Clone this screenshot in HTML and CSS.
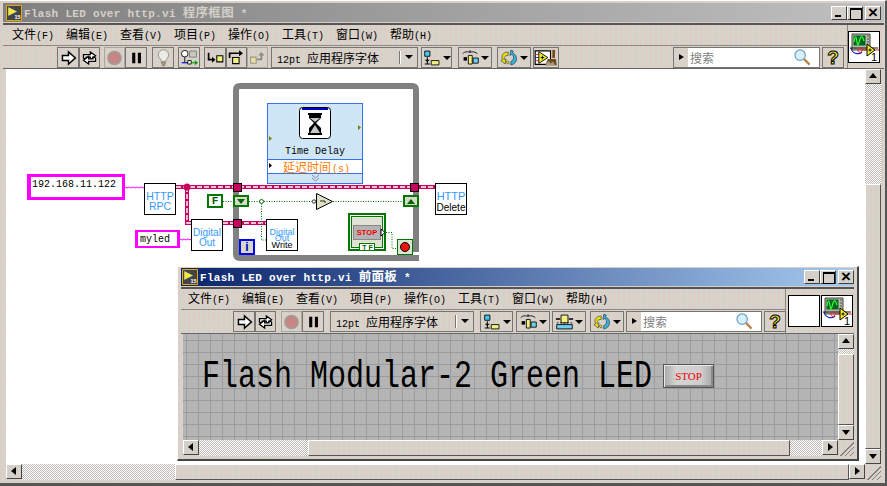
FILE: index.html
```html
<!DOCTYPE html>
<html lang="zh">
<head>
<meta charset="utf-8">
<title>Flash LED over http.vi</title>
<link rel="stylesheet" href="styles.css">
</head>
<body>
<svg class="defs" aria-hidden="true">
  <symbol id="i-app" viewBox="0 0 16 16"><path d="M.5.500h15v15H.5z" fill="#444" stroke="#e8a800"/><path d="M2.500 2.500l8 4-8 4z" fill="#f4ec20" stroke="#dde"  stroke-width=".5"/><text x="8.500" y="14" class="app-num">15</text></symbol>
  <symbol id="i-run" viewBox="0 0 22 20"><path d="M4 7h7V3l8 7-8 7v-4H4z" fill="#fff" stroke="#000" stroke-width="1.700"/></symbol>
  <symbol id="i-cont" viewBox="0 0 22 20"><path d="M4 10V6h8V3l6 4.500-6 4.500V9H7v2z" fill="#fff" stroke="#000" stroke-width="1.500"/><path d="M18 10v4h-8v3l-6-4.500L10 8v3h5V9z" fill="#fff" stroke="#000" stroke-width="1.500"/></symbol>
  <symbol id="i-stop" viewBox="0 0 22 20"><circle cx="11" cy="10" r="7.500" fill="#c98484" stroke="#a09d96" stroke-width="2"/></symbol>
  <symbol id="i-pause" viewBox="0 0 22 20"><path d="M6 4h3.600v12H6zM12.600 4h3.600v12h-3.600z" fill="#000"/></symbol>
  <symbol id="i-bulb" viewBox="0 0 22 20"><path d="M8.500 14c0-3-3.500-4-3.500-7.500a6 6 0 0 1 12 0C17 10 13.500 11 13.500 14z" fill="#ecece4" stroke="#8f8c80"/><path d="M8.500 15h5v1.500h-5zM9.500 17.500h3V19h-3z" fill="#b0a060" stroke="#77735f" stroke-width=".6"/></symbol>
  <symbol id="i-probe" viewBox="0 0 22 20"><circle cx="5.500" cy="5" r="3.800" fill="#fff" stroke="#000"/><path d="M5.500 9v6" stroke="#000"/><path d="M11 2h8v7h-8z" fill="#c8c8c0" stroke="#777"/><path d="M2 15.500h8" stroke="#0000e0" stroke-width="1.300"/><path d="M9 13h4v4H9z" fill="#fff" stroke="#000"/><path d="M13 15.500h4" stroke="#00a000" stroke-width="1.300"/><path d="M17 12.500l4 3-4 3z" fill="#00a000"/></symbol>
  <symbol id="i-into" viewBox="0 0 22 20"><path d="M3 4v8h5" fill="none" stroke="#000" stroke-width="2"/><path d="M7 8.500l4 3.500-4 3.500z"/><path d="M12.500 7.500h7v7h-7z" fill="#f4f080" stroke="#000" stroke-width="1.200"/></symbol>
  <symbol id="i-over" viewBox="0 0 22 20"><path d="M3 10V4.500h11" fill="none" stroke="#000" stroke-width="2"/><path d="M14 1l4.500 3.500L14 8z"/><path d="M6.500 9.500h7.500v7H6.500z" fill="#f4f080" stroke="#000" stroke-width="1.200"/></symbol>
  <symbol id="i-out" viewBox="0 0 22 20"><path d="M10 11.500h5.500V6" fill="none" stroke="#8e8a78" stroke-width="2"/><path d="M12 7l3.500-4L19 7z" fill="#8e8a78"/><path d="M3 9h6.500v7H3z" fill="#e4dfa0" stroke="#9a968a" stroke-width="1.200"/></symbol>
  <symbol id="i-align" viewBox="0 0 22 20"><path d="M2 2h6v6H2z" fill="#40c8f0" stroke="#000"/><path d="M5 9v8M2 17h6" stroke="#000" stroke-width="1.200"/><path d="M2 12l3 2.500L8 12z"/><path d="M9.500 13h9v5h-9z" fill="#f4f080" stroke="#000"/></symbol>
  <symbol id="i-dist" viewBox="0 0 22 20"><path d="M2 5c3-3 5-2 8-2s5-1 9 2" fill="none" stroke="#000"/><path d="M10.500 1v3" stroke="#000"/><path d="M3 9h4v4H3z"/><path d="M8.500 7h4.500v10H8.500z" fill="#f4f080" stroke="#000"/><path d="M14 10h6v6h-6z" fill="#70d0f0" stroke="#000"/></symbol>
  <symbol id="i-size" viewBox="0 0 22 20"><path d="M7 2h8v9H7z" fill="#f4f080" stroke="#000"/><path d="M1 6.500h5M16 6.500h5" stroke="#000" stroke-width="1.500"/><path d="M2 13h18v5H2z" fill="#70d0f0" stroke="#000"/><path d="M2 11h18" stroke="#000" stroke-dasharray="2 2"/></symbol>
  <symbol id="i-cycle" viewBox="0 0 22 20"><path d="M9.500 3C3 3 1 8 3 12l-2 1 5 4 1-6-2 1c-1-3 1-5 4.500-5z" fill="#e8e000" stroke="#444" stroke-width=".8"/><path d="M9.500 17c1.500 0 1-4-1-3.500S6 15 9.500 17z" fill="#e8e000" stroke="#444" stroke-width=".8"/><path d="M12.500 1l-1 6 2-1c3 1 3 7-1 8v4c8-1 9-11 2-14l1-2z" fill="#38b0d8" stroke="#245" stroke-width=".8"/></symbol>
  <symbol id="i-clean" viewBox="0 0 26 20"><path d="M1 2h17v15H1z" fill="#fff" stroke="#000" stroke-width="1.300"/><path d="M1 6h5M1 13h5" stroke="#e02020"/><path d="M1 9.500h5" stroke="#2020e0"/><path d="M5 3l10 6.500L5 16z" fill="#f4ec20" stroke="#000"/><path d="M7 9.500h4M9 7.500v4" stroke="#000"/><path d="M20 1h3v9h-3z" fill="#7a4a1a"/><path d="M15 11h9l1 7H12z" fill="#6e4a20"/><path d="M13 16l3-3 2 3 3-2 2 4H13z" fill="#a89878"/></symbol>
  <symbol id="i-mag" viewBox="0 0 18 18"><path d="M10.500 10.500l6 6" stroke="#b8864a" stroke-width="2.400"/><circle cx="6.500" cy="6.500" r="5.500" fill="#d8f0fa" stroke="#6f9fc0" stroke-width="1.300"/></symbol>
  <symbol id="i-vi" viewBox="0 0 30 30"><path d="M3 2h18v16H3z" fill="#b8b8a8" stroke="#444"/><path d="M4.500 3.500h12v10h-12z" fill="#062"/><path d="M5 10c1-7 2-7 3 0s2 0 3-3 2-4 4 2" fill="none" stroke="#3f3" stroke-width="1.200"/><path d="M18 4h2M18 7h2M18 10h2" stroke="#555"/><path d="M2 16c1 6 8 7 11 4" fill="none" stroke="#22c" stroke-width="1.200"/><path d="M1 16h28" stroke="#111"/><path d="M9 19c0-4 4-4 4-1s-3 3-4 1z" fill="none" stroke="#e22"/><path d="M13 18h17" stroke="#e22"/><path d="M18 12l8 6-8 6z" fill="#f4ec20" stroke="#000"/><path d="M19.500 18h3M21 16.500v3" stroke="#000"/></symbol>
</svg>

<main class="win back">
  <header class="title title-gray">
    <svg class="app"><use href="#i-app"/></svg>
    <span class="title-text">Flash LED over http.vi <span class="zh">程序框图</span> *</span>
    <span class="wbtn wbtn-min"></span><span class="wbtn wbtn-max"></span><span class="wbtn wbtn-close m2"></span>
  </header>
  <div class="head head-back">
    <div class="head-main">
      <nav class="menu menu-back">
        <span class="mi">文件<span class="k">(F)</span></span>
        <span class="mi">编辑<span class="k">(E)</span></span>
        <span class="mi">查看<span class="k">(V)</span></span>
        <span class="mi">项目<span class="k">(P)</span></span>
        <span class="mi">操作<span class="k">(O)</span></span>
        <span class="mi">工具<span class="k">(T)</span></span>
        <span class="mi">窗口<span class="k">(W)</span></span>
        <span class="mi">帮助<span class="k">(H)</span></span>
      </nav>
      <div class="tools tools-back">
        <span class="btn w22"><svg class="ic"><use href="#i-run"/></svg></span><span class="btn w21"><svg class="ic"><use href="#i-cont"/></svg></span>
        <span class="btn w21 m4 dim"><svg class="ic"><use href="#i-stop"/></svg></span><span class="btn w22"><svg class="ic"><use href="#i-pause"/></svg></span>
        <span class="btn w22 m5"><svg class="ic"><use href="#i-bulb"/></svg></span>
        <span class="btn w22 m4"><svg class="ic"><use href="#i-probe"/></svg></span>
        <span class="btn w22 m4"><svg class="ic"><use href="#i-into"/></svg></span><span class="btn w21"><svg class="ic"><use href="#i-over"/></svg></span><span class="btn w21 dim"><svg class="ic"><use href="#i-out"/></svg></span>
        <span class="ring ring-back m3"><span class="ring-text"><span class="mono">12pt</span>应用程序字体</span><span class="ring-arrow"></span></span>
        <span class="btn w31 m3"><svg class="ic"><use href="#i-align"/></svg><i class="tri"></i></span>
        <span class="btn w34 m6"><svg class="ic"><use href="#i-dist"/></svg><i class="tri"></i></span>
        <span class="btn w34 m5"><svg class="ic"><use href="#i-cycle"/></svg><i class="tri"></i></span>
        <span class="btn w26 m2"><svg class="ic ic-wide"><use href="#i-clean"/></svg></span>
        <span class="grow"></span>
        <span class="search search-back"><i class="search-tab"></i><span class="search-ph">搜索</span><svg class="mag"><use href="#i-mag"/></svg></span>
        <span class="btn w22 m2"><span class="help">?</span></span>
      </div>
    </div>
    <div class="panes">
      <span class="vi-icon"><svg class="vi-svg"><use href="#i-vi"/></svg><b class="vi-num">1</b></span>
    </div>
  </div>
  <div class="work">
    <section class="diagram">
      <div class="origin">
        <div class="delay">
          <div class="delay-top"><span class="delay-name">Time Delay</span></div>
          <div class="delay-row">延迟时间<span class="delay-u">(s)</span></div>
          <div class="delay-end"></div>
        </div>
        <svg class="wires" width="887" height="486" viewBox="0 0 887 486">
          <!-- while loop -->
          <path class="loop" d="M416 252V90q0-4-4-4H240q-4 0-4 4v164q0 4 4 4h179"/>
          <!-- thin string wires -->
          <path class="w-str" d="M125 187l2 1 2-1 2 1 2-1 2 1 2-1 2 1 2-1 2 1 2-1M180 239l2 1 2-1 2 1 2-1 2 1 1-1"/>
          <!-- error wires -->
          <path class="w-err" d="M176 187h260M187 187v36h4M223 223h43"/>
          <path class="w-err-c" d="M176 187h260M187 187v36h4M223 223h43"/>
          <circle class="junction" cx="187" cy="187" r="3.500"/>
          <!-- boolean wires -->
          <path class="w-bool" d="M223 201.500h10M249 201.500h63M333 201.500h70M261.500 201v39h5M386 232.500h6v16h5"/>
          <circle class="bool-j" cx="261.500" cy="201.500" r="2"/>
          <!-- tunnels -->
          <rect class="tunnel" x="233.500" y="183.500" width="8" height="8"/>
          <rect class="tunnel" x="233.500" y="219.500" width="8" height="8"/>
          <rect class="tunnel" x="410.500" y="183.500" width="8" height="8"/>
          <!-- shift registers -->
          <rect class="sr" x="234" y="196" width="14" height="10"/>
          <path class="sr-t" d="M237 199h8l-4 5z"/>
          <rect class="sr" x="404" y="196" width="14" height="10"/>
          <path class="sr-t" d="M407 204h8l-4-5z"/>
          <!-- not gate -->
          <circle class="not-c" cx="314" cy="201.500" r="1.700"/>
          <path class="not" d="M316.500 193.500l16 8-16 8z"/>
          <path class="not-g" d="M320 201h5M325 201v2"/>
          <!-- stop terminal -->
          <rect class="term-o" x="349" y="214" width="36" height="36"/>
          <rect class="term-i" x="351.500" y="216.500" width="31" height="31"/>
          <rect class="term-b" x="353.500" y="225.500" width="27" height="14"/>
          <rect class="term-tf" x="359.500" y="243.500" width="15" height="7"/>
          <path class="term-out" d="M381 229l4 3.500-4 3.500z"/>
          <!-- stop condition -->
          <rect class="cond" x="397.500" y="239.500" width="15" height="15"/>
          <circle class="cond-r" cx="405" cy="247" r="4.500"/>
          <!-- hourglass -->
          <rect class="hg" x="299.500" y="107.500" width="31" height="31" rx="3"/>
          <path class="hg-top" d="M302 108h26v2h-26z"/>
          <path class="hg-f" d="M308 113h14v2h-1v3l-5 5 5 5v5h1v2h-14v-2h1v-5l5-5-5-5v-3h-1z"/>
          <path class="hg-s" d="M310 118h10l-5 4zM315 125l5 8h-10z"/>
          <!-- time delay terminals -->
          <path class="td-t" d="M269 136l3 2.500-3 2.500zM358 125l3 2.500-3 2.500z"/>
          <path class="td-r" d="M269 163l3 2.500-3 2.500z"/>
          <path class="td-c" d="M312 175l3.500 3 3.500-3M312 178l3.500 3 3.500-3"/>
        </svg>
        <div class="const const-ip">192.168.11.122</div>
        <div class="const const-my">myled</div>
        <div class="node node-rpc"><span class="blue">HTTP<br>RPC</span></div>
        <div class="node node-out"><span class="blue">Digital<br>Out</span></div>
        <div class="node node-write"><span class="blue small">Digital<br>Out</span><span class="ov">Write</span></div>
        <div class="node node-del"><span class="blue big">HTTP</span><br><span class="blk">Delete</span></div>
        <div class="bool-f">F</div>
        <div class="iter">i</div>
        <div class="tf">T F</div>
        <div class="stop-lbl">STOP</div>
      </div>
    </section>
    <aside class="vbar vbar-back">
      <span class="sb sb-up"></span><span class="chk chk-v"></span><span class="thumb"></span><span class="sb sb-down"></span>
    </aside>
  </div>
  <div class="hbar hbar-back">
    <span class="sb sb-left"></span><span class="chk chk-h"></span><span class="thumb"></span><span class="sb sb-right"></span><span class="grip"></span>
  </div>
</main>

<section class="win front">
  <header class="title title-blue">
    <svg class="app"><use href="#i-app"/></svg>
    <span class="title-text">Flash LED over http.vi <span class="zh">前面板</span> *</span>
    <span class="wbtn wbtn-min"></span><span class="wbtn wbtn-max"></span><span class="wbtn wbtn-close m2"></span>
  </header>
  <div class="head head-front">
    <div class="head-main">
      <nav class="menu menu-front">
        <span class="mi">文件<span class="k">(F)</span></span>
        <span class="mi">编辑<span class="k">(E)</span></span>
        <span class="mi">查看<span class="k">(V)</span></span>
        <span class="mi">项目<span class="k">(P)</span></span>
        <span class="mi">操作<span class="k">(O)</span></span>
        <span class="mi">工具<span class="k">(T)</span></span>
        <span class="mi">窗口<span class="k">(W)</span></span>
        <span class="mi">帮助<span class="k">(H)</span></span>
      </nav>
      <div class="tools tools-front">
        <span class="btn w22"><svg class="ic"><use href="#i-run"/></svg></span><span class="btn w21"><svg class="ic"><use href="#i-cont"/></svg></span>
        <span class="btn w21 m5 dim"><svg class="ic"><use href="#i-stop"/></svg></span><span class="btn w22"><svg class="ic"><use href="#i-pause"/></svg></span>
        <span class="ring ring-front m6"><span class="ring-text"><span class="mono">12pt</span>应用程序字体</span><span class="ring-arrow"></span></span>
        <span class="btn w33 m6"><svg class="ic"><use href="#i-align"/></svg><i class="tri"></i></span>
        <span class="btn w34 m3"><svg class="ic"><use href="#i-dist"/></svg><i class="tri"></i></span>
        <span class="btn w34 m2"><svg class="ic"><use href="#i-size"/></svg><i class="tri"></i></span>
        <span class="btn w34 m4"><svg class="ic"><use href="#i-cycle"/></svg><i class="tri"></i></span>
        <span class="search search-front m2"><i class="search-tab"></i><span class="search-ph">搜索</span><svg class="mag"><use href="#i-mag"/></svg></span>
        <span class="btn w22 m2"><span class="help">?</span></span>
      </div>
    </div>
    <div class="panes panes-front">
      <span class="vi-icon"></span>
      <span class="vi-icon"><svg class="vi-svg"><use href="#i-vi"/></svg><b class="vi-num">1</b></span>
    </div>
  </div>
  <div class="work">
    <section class="panel">
      <h1 class="big-label">Flash Modular-2 Green LED</h1>
      <i class="ghost"></i>
      <span class="stop-btn">STOP</span>
    </section>
    <aside class="vbar vbar-front">
      <span class="sb sb-up"></span><span class="chk chk-v"></span><span class="thumb"></span><span class="sb sb-down"></span>
    </aside>
  </div>
  <div class="hbar hbar-front">
    <span class="sb sb-left"></span><span class="chk chk-h"></span><span class="thumb"></span><span class="chk chk-h2"></span><span class="sb sb-right"></span><span class="grip"></span>
  </div>
</section>
</body>
</html>
```
FILE: styles.css
```css
* { box-sizing: border-box; }
html, body { margin: 0; height: 100%; }
body {
  position: relative;
  width: 887px;
  height: 486px;
  overflow: hidden;
  background: #d4d0c8;
  font-family: "Noto Sans CJK SC", "Liberation Sans", sans-serif;
  color: #000;
}
.defs { position: absolute; width: 0; height: 0; }
.app-num { font: bold 5.500px "Liberation Sans", sans-serif; fill: #fff; }

.win {
  position: absolute;
  display: flex;
  flex-direction: column;
  background-color: #d6d3cb;
  background-image: radial-gradient(circle at 1px 1px, #e3c8c2 .6px, transparent 1px);
  background-size: 5px 3px;
}
.back {
  left: 0; top: 0; width: 887px; height: 486px;
  padding: 2px 1px 3px 3px;
  border-top: 1px solid #fff;
  border-bottom: 3px solid #555;
  border-right: 2px solid #555;
}
.front {
  left: 177px; top: 266px; width: 682px; height: 195px;
  padding: 1px 3px 3px 3px;
  border: 1px solid #fff;
  border-right: 2px solid #444;
  border-bottom: 2px solid #444;
}

/* title bars */
.title {
  display: flex;
  align-items: center;
  height: 19px;
  flex: none;
}
.title-gray { background: linear-gradient(90deg, #808080, #c0c0c0); color: #d4d0c8; padding-right: 3px; }
.title-blue { background: linear-gradient(90deg, #0a246a, #a6caf0); color: #fff; height: 18px; }
.app { width: 16px; height: 16px; margin-left: 3px; flex: none; }
.title-blue .app { margin-left: 1px; }
.title-text {
  flex: 1;
  margin-left: 2px;
  font: bold 11px/18px "Liberation Mono", "Noto Sans CJK SC", monospace;
  letter-spacing: .3px;
  white-space: pre;
}
.title-text .zh { font: bold 12.500px/18px "Noto Sans CJK SC", sans-serif; }
.wbtn {
  position: relative;
  width: 16px;
  height: 14px;
  flex: none;
  color: #000;
  background: #d4d0c8;
  border: 1px solid;
  border-color: #fff #404040 #404040 #fff;
}
.wbtn-min::after { content: ""; position: absolute; left: 3px; bottom: 2px; width: 6px; height: 2px; background: #000; }
.wbtn-max::after { content: ""; position: absolute; left: 2px; top: 1px; width: 10px; height: 9px; border: 1px solid #000; border-top-width: 2px; }
.wbtn-close::after {
  content: "×";
  position: absolute; left: 0; right: 0; top: -2px;
  text-align: center;
  font: bold 17px/16px "Liberation Sans", sans-serif;
}

/* head */
.head {
  display: flex;
  flex: none;
  border-top: 2px solid #555;
  border-bottom: 1px solid #666;
  margin-top: 1px;
}
.head-back { height: 46px; }
.head-front { height: 47px; }
.head-main { flex: 1; display: flex; flex-direction: column; min-width: 0; }
.menu { display: flex; height: 20px; flex: none; align-items: center; font-size: 12px; }
.menu-back { padding-left: 9px; }
.menu-front { padding-left: 7px; }
.mi { width: 54px; flex: none; white-space: nowrap; line-height: 20px; }
.k { font: 10px/20px "Liberation Mono", monospace; }
.tools {
  flex: 1;
  display: flex;
  align-items: flex-start;
  padding-top: 1px;
  border-top: 1px solid #8a8880;
}
.tools-back { padding-left: 54px; padding-right: 3px; }
.tools-front { padding-left: 52px; }
.grow { flex: 1; }

.btn {
  display: inline-flex;
  align-items: center;
  justify-content: center;
  height: 21px;
  flex: none;
  border: 1px solid #77756f;
  position: relative;
}
.dim { border-color: #aaa79f; }
.w21 { width: 21px; } .w22 { width: 22px; } .w26 { width: 26px; }
.w31 { width: 31px; } .w33 { width: 33px; } .w34 { width: 34px; }
.m2 { margin-left: 2px; } .m3 { margin-left: 3px; } .m4 { margin-left: 4px; }
.m5 { margin-left: 5px; } .m6 { margin-left: 6px; }
.ic { width: 19px; height: 18px; flex: none; }
.ic-wide { width: 24px; }
.tri {
  width: 0; height: 0; margin-left: 1px;
  border: 4px solid transparent;
  border-top: 4px solid #000;
  border-bottom: 0;
  flex: none;
}
.ring {
  position: relative;
  display: flex;
  align-items: center;
  height: 21px;
  flex: none;
  border: 1px solid #77756f;
  font-size: 12px;
}
.ring-back { width: 147px; }
.ring-front { width: 144px; }
.ring-text { flex: 1; padding-left: 5px; white-space: nowrap; }
.mono { font: 10px "Liberation Mono", monospace; letter-spacing: 0; margin-right: 6px; }
.ring-arrow {
  width: 17px; height: 13px; flex: none; position: relative;
  border-left: 1px solid #fff;
}
.ring-arrow::before { content: ""; position: absolute; left: -2px; top: 0; width: 1px; height: 13px; background: #777; }
.ring-arrow::after {
  content: ""; position: absolute; left: 4px; top: 4px;
  border: 4px solid transparent; border-top-color: #000; border-bottom: 0;
}
.search {
  position: relative;
  display: flex;
  align-items: center;
  height: 21px;
  flex: none;
  border: 1px solid #77756f;
}
.search-back { width: 147px; }
.search-front { width: 136px; }
.search-tab {
  position: relative;
  width: 14px; height: 19px; flex: none;
}
.search-tab::after {
  content: ""; position: absolute; left: 5px; top: 6px;
  border: 3.500px solid transparent; border-left: 5px solid #000; border-right: 0;
}
.search-ph {
  flex: 1; height: 19px;
  background: #fff;
  color: #808080;
  font-size: 12px;
  line-height: 19px;
  padding-left: 2px;
}
.mag { position: absolute; right: 8px; top: 1px; width: 17px; height: 17px; }
.help {
  font: bold 19px/19px "Liberation Sans", sans-serif;
  color: #f4ec20;
  -webkit-text-stroke: 1px #000;
}
.panes {
  flex: none;
  width: 37px;
  display: flex;
  align-items: flex-start;
  gap: 1px;
  padding-top: 6px;
  border-left: 1px solid #8a8880;
}
.panes-front { width: 69px; padding-left: 2px; }
.vi-icon {
  position: relative;
  width: 32px; height: 32px; flex: none;
  background: #fff;
  border: 1px solid #000;
}
.vi-svg { display: block; width: 30px; height: 30px; }
.vi-num { position: absolute; right: 2px; bottom: -1px; font: 11px/12px "Liberation Sans", sans-serif; }

/* work area */
.work { flex: 1; display: flex; min-height: 0; }
.diagram {
  position: relative;
  flex: 1;
  background: #fff;
  overflow: hidden;
  margin-left: 3px;
}
.origin { position: absolute; left: -6px; top: -69px; width: 887px; height: 486px; }
.wires { position: absolute; left: 0; top: 0; }

.vbar { width: 16px; flex: none; display: flex; flex-direction: column; }
.vbar-back { margin-right: 3px; }
.chk {
  background: repeating-conic-gradient(#fff 0 25%, #bdbbb4 0 50%) 0 0 / 2px 2px;
}
.thumb {
  flex: 1;
  border: 1px solid;
  border-color: #fff #555 #555 #fff;
  min-width: 0;
}
.sb {
  position: relative;
  flex: none;
  width: 16px; height: 15px;
  border: 1px solid;
  border-color: #fff #444 #444 #fff;
  background: #d4d0c8;
}
.sb::after { content: ""; position: absolute; border: 4px solid transparent; }
.sb-up::after { left: 3px; top: 3px; border-bottom: 5px solid #000; border-top: 0; }
.sb-down::after { left: 3px; top: 4px; border-top: 5px solid #000; border-bottom: 0; }
.sb-left::after { left: 4px; top: 2px; border-right: 5px solid #000; border-left: 0; }
.sb-right::after { left: 5px; top: 2px; border-left: 5px solid #000; border-right: 0; }
.hbar { display: flex; height: 16px; flex: none; }
.hbar-back { margin: 0 3px; }
.hbar-front { margin-left: 2px; }
.grip { width: 16px; flex: none; background: linear-gradient(135deg, transparent 55%, #808080 55% 60%, transparent 60% 70%, #808080 70% 75%, transparent 75% 85%, #808080 85% 90%, transparent 90%); }
.vbar-back .chk-v { height: 100px; flex: none; }
.hbar-back .chk-h { width: 153px; flex: none; }
.vbar-front .chk-v { height: 5px; flex: none; }
.hbar-front .chk-h { width: 109px; flex: none; }
.hbar-front .chk-h2 { width: 32px; flex: none; }

/* diagram nodes */
.loop { fill: none; stroke: #808080; stroke-width: 6; }
.w-str { fill: none; stroke: #ff00ff; stroke-width: 1; }
.w-err { fill: none; stroke: #c8005f; stroke-width: 4; }
.w-err-c { fill: none; stroke: #fff; stroke-width: 1.400; stroke-dasharray: 5 2; }
.junction { fill: #c8005f; }
.w-bool { fill: none; stroke: #006f00; stroke-width: 1; stroke-dasharray: 1 1.500; }
.bool-j { fill: #fff; stroke: #006f00; }
.tunnel { fill: #c8005f; stroke: #000; }
.sr { fill: #d8d8c8; stroke: #007800; stroke-width: 2; }
.sr-t { fill: #006400; }
.not-c { fill: #fff; stroke: #000; stroke-width: .8; }
.not { fill: #e0dfc8; stroke: #000; }
.not-g { fill: none; stroke: #000; stroke-width: .8; }
.term-o { fill: #fff; stroke: #007800; stroke-width: 2; }
.term-i { fill: #e2e2d4; stroke: #007800; }
.term-b { fill: #b4b4b4; stroke: #888; }
.term-tf { fill: #fff; stroke: #007800; }
.term-out { fill: #fff; stroke: #000; }
.cond { fill: #d8e8d0; stroke: #007800; }
.cond-r { fill: #f01010; stroke: #000; }
.hg { fill: #fff; stroke: #000; }
.hg-top { fill: #0000c8; }
.hg-f { fill: #000; }
.hg-s { fill: #c8c8c8; }
.td-t { fill: #808000; }
.td-r { fill: #000; }
.td-c { fill: none; stroke: #7a8cb0; }

.const {
  position: absolute;
  background: #fff;
  border: 3px solid #ff00ff;
  border-left-width: 4px;
  font: 10px/10px "Liberation Mono", monospace;
  white-space: nowrap;
}
.const-ip { left: 27px; top: 174px; width: 98px; height: 26px; padding: 3px 0 0 1px; }
.const-my { left: 135px; top: 230px; width: 45px; height: 18px; border-width: 2px 3px; padding: 3px 0 0 2px; }
.node {
  position: absolute;
  width: 32px; height: 32px;
  background: #fff;
  border: 1px solid #000;
  text-align: center;
  font: 10.500px/10px "Liberation Sans", sans-serif;
  padding-top: 7px;
}
.node-rpc { left: 144px; top: 183px; }
.node-out { left: 191px; top: 219px; padding-top: 8px; font-size: 10px; }
.node-write { left: 266px; top: 219px; padding-top: 9px; font-size: 9px; line-height: 6px; }
.node-del { left: 435px; top: 183px; line-height: 11px; }
.blue { color: #3399ff; }
.small { display: block; }
.ov { display: block; font: 9px/8px "Liberation Sans", sans-serif; color: #000; }
.big { font-size: 11px; }
.blk { font-size: 10px; color: #000; }
.bool-f {
  position: absolute; left: 207px; top: 194px; width: 16px; height: 14px;
  border: 2px solid #007800; background: #fff; color: #006400;
  font: bold 11px/10px "Liberation Mono", monospace; text-align: center;
}
.iter {
  position: absolute; left: 239px; top: 239px; width: 16px; height: 16px;
  border: 2px solid #0000ff; background: #d8d8c8; color: #0000c8;
  font: bold 12px/12px "Liberation Sans", sans-serif; text-align: center;
}
.tf {
  position: absolute; left: 360px; top: 243.500px; width: 15px; height: 7px;
  color: #006400; font: bold 7px/7px "Liberation Sans", sans-serif; text-align: center; white-space: nowrap;
}
.stop-lbl {
  position: absolute; left: 354px; top: 226px; width: 26px;
  color: #f00000; font: bold 7.500px/13px "Liberation Sans", sans-serif; text-align: center;
}
.delay {
  position: absolute;
  left: 267px; top: 103px; width: 96px; height: 81px;
  border: 1px solid #3b6ff0;
  display: flex; flex-direction: column;
  background: #cfe6f7;
}
.delay-top { height: 55px; flex: none; text-align: center; padding-top: 42px; }
.delay-name { display: block; font: 10px/12px "Liberation Mono", monospace; white-space: nowrap; }
.delay-row {
  height: 15px; flex: none;
  background: #fff;
  border-top: 1px solid #3b6ff0;
  border-bottom: 1px solid #3b6ff0;
  color: #ff8000;
  padding-left: 15px;
  font-size: 12px;
  line-height: 13px;
  white-space: nowrap;
}
.delay-u { font: 10px/13px "Liberation Mono", monospace; margin-left: 1px; }
.delay-end { flex: 1; }

/* front panel */
.panel {
  position: relative;
  flex: 1;
  margin-left: 2px;
  overflow: hidden;
  background-color: #b4b4b4;
  background-image:
    linear-gradient(90deg, #9c9c9c 1px, transparent 1px),
    linear-gradient(#9c9c9c 1px, transparent 1px);
  background-size: 12px 12px;
  background-position: 3px 6px;
}
.big-label {
  position: absolute;
  left: 19px; top: 26px;
  margin: 0;
  font: normal 30px/34px "Liberation Mono", monospace;
  white-space: nowrap;
  transform: scaleY(1.3);
}
.ghost {
  position: absolute; left: 98px; top: 26px;
  border: 4px solid transparent; border-left: 6px solid #9a9a9a;
}
.stop-btn {
  position: absolute;
  left: 480px; top: 30px; width: 51px; height: 24px;
  display: flex; align-items: center; justify-content: center;
  color: #f00000;
  font: 11px "Liberation Serif", serif;
  border: 1px solid #555;
  box-shadow: inset 1px 1px 0 #e8e8e8, inset -2px -2px 0 #8a8a8a;
  background: linear-gradient(90deg, #a8a8a8, #d4d4d4 25%, #cfcfcf 75%, #a8a8a8);
}
```
